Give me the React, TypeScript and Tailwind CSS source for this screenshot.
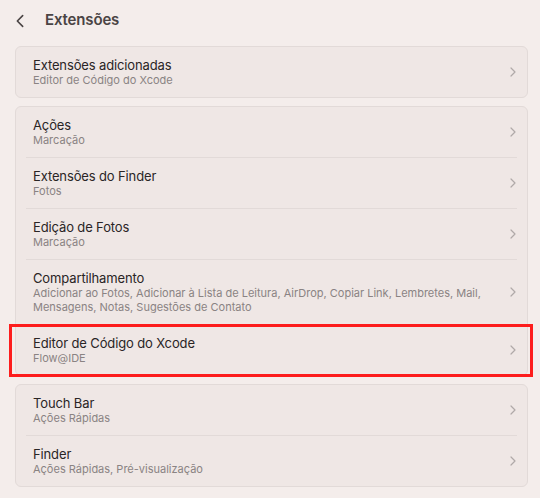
import React from 'react';

interface Row {
  title: string;
  subtitle: React.ReactNode;
  highlighted?: boolean;
}

const groups: Row[][] = [
  [{ title: 'Extensões adicionadas', subtitle: 'Editor de Código do Xcode' }],
  [
    { title: 'Ações', subtitle: 'Marcação' },
    { title: 'Extensões do Finder', subtitle: 'Fotos' },
    { title: 'Edição de Fotos', subtitle: 'Marcação' },
    {
      title: 'Compartilhamento',
      subtitle: (
        <>
          Adicionar ao Fotos, Adicionar à Lista de Leitura, AirDrop, Copiar Link, Lembretes, Mail,
          <br />
          Mensagens, Notas, Sugestões de Contato
        </>
      ),
    },
    { title: 'Editor de Código do Xcode', subtitle: 'Flow@IDE', highlighted: true },
  ],
  [
    { title: 'Touch Bar', subtitle: 'Ações Rápidas' },
    { title: 'Finder', subtitle: 'Ações Rápidas, Pré-visualização' },
  ],
];

const Chevron = ({ className, left }: { className?: string; left?: boolean }) => (
  <svg viewBox="0 0 6 10" className={className} fill="none" stroke="currentColor" strokeWidth="1.2" strokeLinecap="round" strokeLinejoin="round">
    <path d={left ? 'M5 1L1 5l4 4' : 'M1 1l4 4-4 4'} />
  </svg>
);

const ListRow = ({ row, last }: { row: Row; last: boolean }) => (
  <div className="relative">
    <div className="flex items-center pl-[17px] pr-[11px] py-[10px]">
      <div className="flex-grow">
        <p className="text-[13px] leading-[16px] text-[#2a2525] tracking-[-0.01em]">{row.title}</p>
        <p className="text-[11px] leading-[14px] text-[#8a8383]">{row.subtitle}</p>
      </div>
      <Chevron className="w-[6px] h-[10px] text-[#b0a9a8] flex-shrink-0" />
    </div>
    {!last && <div className="mx-[10px] h-px bg-[#e2dad8]" />}
    {row.highlighted && (
      <div className="absolute left-[-7px] right-[-6px] top-[-1px] bottom-[-2px] border-[3px] border-[#fd1d1d] pointer-events-none" />
    )}
  </div>
);

export default function App() {
  return (
    <div
      className="w-[540px] h-[498px] bg-[#f4edeb] pl-[15px] pr-[12px] pt-[10px] overflow-hidden"
      style={{ fontFamily: 'Inter, "Noto Sans", sans-serif' }}
    >
      <div className="flex items-center h-[21px] mb-[15px]">
        <Chevron left className="w-[8px] h-[14px] ml-[1px] text-[#4a4444]" />
        <h1 className="ml-[21px] text-[15px] font-semibold text-[#4a4444] tracking-[-0.01em]">Extensões</h1>
      </div>
      <div className="flex flex-col gap-[8px]">
        {groups.map((group, gi) => (
          <div key={gi} className="bg-[#efe7e5] border border-[#e2dad8] rounded-[6px]">
            {group.map((row, ri) => (
              <ListRow key={row.title} row={row} last={ri === group.length - 1} />
            ))}
          </div>
        ))}
      </div>
    </div>
  );
}
